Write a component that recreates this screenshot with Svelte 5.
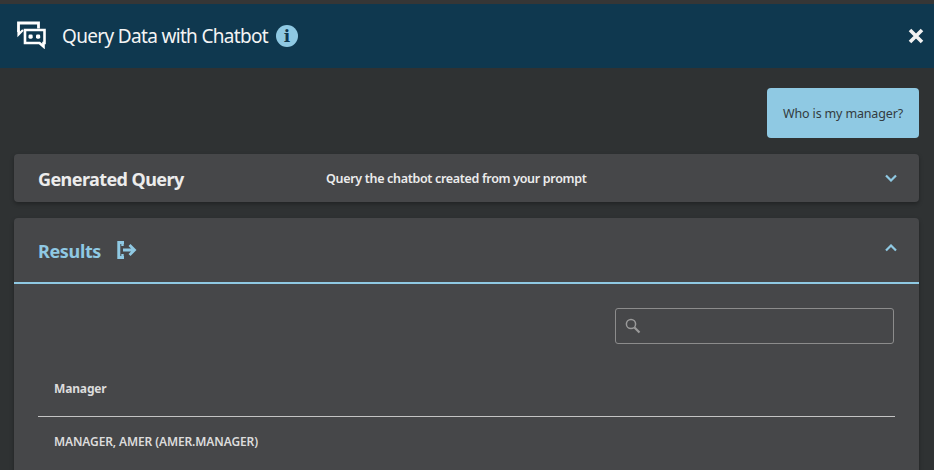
<script lang="ts">
  const columnName = 'Manager';
  const rows = ['MANAGER, AMER (AMER.MANAGER)'];
</script>

<div class="panel">
  <header class="title-bar">
    <svg class="chat-icon" width="30" height="28" viewBox="0 0 30 28" fill="none">
      <path d="M2.5 11V2h20v5.5" stroke="#fff" stroke-width="2.8" />
      <path d="M2.5 9v4.5l4.5-4.5" stroke="#fff" stroke-width="2.2" />
      <path d="M9 9h19.5v13h-1v3.5l-4-3.5H9z" stroke="#fff" stroke-width="2.6" />
      <rect x="12.5" y="13.5" width="4.2" height="4.2" rx="1.4" fill="#fff" />
      <rect x="20" y="13.5" width="4.2" height="4.2" rx="1.4" fill="#fff" />
    </svg>
    <h1>Query Data with Chatbot</h1>
    <span class="info">i</span>
    <svg class="close" width="16" height="16" viewBox="0 0 16 16" fill="none">
      <path d="M2 2l12 12M14 2L2 14" stroke="#f2f2f2" stroke-width="3.6" />
    </svg>
  </header>

  <main class="content">
    <div class="bubble-row">
      <div class="bubble">Who is my manager?</div>
    </div>

    <section class="card query">
      <span class="query-title">Generated Query</span>
      <span class="query-note">Query the chatbot created from your prompt</span>
      <svg class="chevron" width="12" height="8" viewBox="0 0 12 8" fill="none">
        <path d="M1 1.5l5 5 5-5" stroke="#8fc9e3" stroke-width="2.2" />
      </svg>
    </section>

    <section class="card">
      <div class="results-head">
        <span class="results-title">Results</span>
        <svg class="export" width="20" height="18" viewBox="0 0 20 18" fill="none">
          <path d="M7 1.5H1.8v15H7" stroke="#8fc9e3" stroke-width="3" />
          <path d="M5.5 1v4M5.5 13v4" stroke="#8fc9e3" stroke-width="2.4" />
          <path d="M6 9h11M12.5 4l5 5-5 5" stroke="#8fc9e3" stroke-width="2.8" />
        </svg>
        <svg class="chevron" width="12" height="8" viewBox="0 0 12 8" fill="none">
          <path d="M1 6.5l5-5 5 5" stroke="#8fc9e3" stroke-width="2.2" />
        </svg>
      </div>

      <div class="results-body">
        <div class="search">
          <svg width="18" height="18" viewBox="0 0 18 18" fill="none">
            <circle cx="7" cy="7" r="4.6" stroke="#9a9a9a" stroke-width="1.5" />
            <path d="M10.5 10.5l5 5" stroke="#9a9a9a" stroke-width="2.2" />
          </svg>
        </div>

        <table>
          <thead>
            <tr><th>{columnName}</th></tr>
          </thead>
          <tbody>
            {#each rows as row}
              <tr><td>{row}</td></tr>
            {/each}
          </tbody>
        </table>
      </div>
    </section>
  </main>
</div>

<style>
  :global(body) {
    margin: 0;
    overflow: hidden;
    background: #2f3233;
  }

  .panel {
    height: 470px;
    overflow: hidden;
    border-top: 4px solid #363636;
    box-sizing: border-box;
    font-family: "Noto Sans", sans-serif;
    background: #2f3233;
  }

  .title-bar {
    display: flex;
    align-items: center;
    height: 64px;
    padding: 0 10px 0 16px;
    background: #0f384f;
    color: #fff;
  }

  .chat-icon {
    margin-right: 16px;
    margin-top: -2px;
  }

  h1 {
    margin: 0;
    font-size: 19px;
    font-weight: 400;
    letter-spacing: -0.67px;
    color: #f4f4f4;
  }

  .info {
    display: flex;
    align-items: center;
    justify-content: center;
    width: 22px;
    height: 22px;
    margin-left: 8px;
    border-radius: 50%;
    background: #8fc9e3;
    color: #0f384f;
    font-family: "DejaVu Serif", serif;
    font-size: 17px;
    font-weight: 700;
  }

  .close {
    margin-left: auto;
  }

  .content {
    padding: 20px 15px 0 14px;
  }

  .bubble-row {
    display: flex;
    justify-content: flex-end;
  }

  .bubble {
    display: flex;
    align-items: center;
    justify-content: center;
    width: 152px;
    height: 50px;
    border-radius: 4px;
    background: #8fc9e3;
    color: #333b40;
    font-size: 12.5px;
    letter-spacing: -0.16px;
  }

  .card {
    margin-top: 16px;
    border-radius: 4px;
    background: #464749;
    box-shadow: 0 2px 4px rgba(0, 0, 0, 0.3);
  }

  .query {
    display: flex;
    align-items: center;
    height: 48px;
    padding: 0 22px 0 24px;
    box-sizing: border-box;
  }

  .query-title {
    width: 288px;
    flex: none;
    padding-top: 2px;
    font-size: 18px;
    font-weight: 700;
    letter-spacing: -0.58px;
    color: #ececec;
  }

  .query-note {
    font-size: 12.5px;
    font-weight: 600;
    letter-spacing: -0.32px;
    color: #ececec;
  }

  .chevron {
    margin-left: auto;
  }

  .results-head {
    display: flex;
    align-items: center;
    height: 64px;
    padding: 0 22px 0 24px;
    border-bottom: 2px solid #8fc9e3;
  }

  .results-title {
    padding-top: 2px;
    font-size: 18px;
    font-weight: 700;
    letter-spacing: -0.35px;
    color: #8fc9e3;
  }

  .export {
    margin-left: 16px;
  }

  .results-head .chevron {
    margin-top: -4px;
  }

  .results-body {
    padding: 24px 24px 30px;
  }

  .search {
    display: flex;
    align-items: center;
    box-sizing: border-box;
    width: 279px;
    height: 36px;
    margin: 0 1px 0 auto;
    padding-left: 8px;
    border: 1px solid #8c8c8c;
    border-radius: 3px;
  }

  table {
    width: 100%;
    margin-top: 24px;
    border-collapse: collapse;
    font-size: 12px;
    color: #dcdcdc;
    text-align: left;
  }

  th {
    box-sizing: border-box;
    height: 48px;
    padding: 0 16px 7px;
    border-bottom: 1px solid #c4c4c4;
    font-weight: 700;
    letter-spacing: -0.15px;
  }

  td {
    box-sizing: border-box;
    height: 50px;
    padding: 1px 16px 0;
    font-weight: 600;
    letter-spacing: -0.12px;
  }
</style>
